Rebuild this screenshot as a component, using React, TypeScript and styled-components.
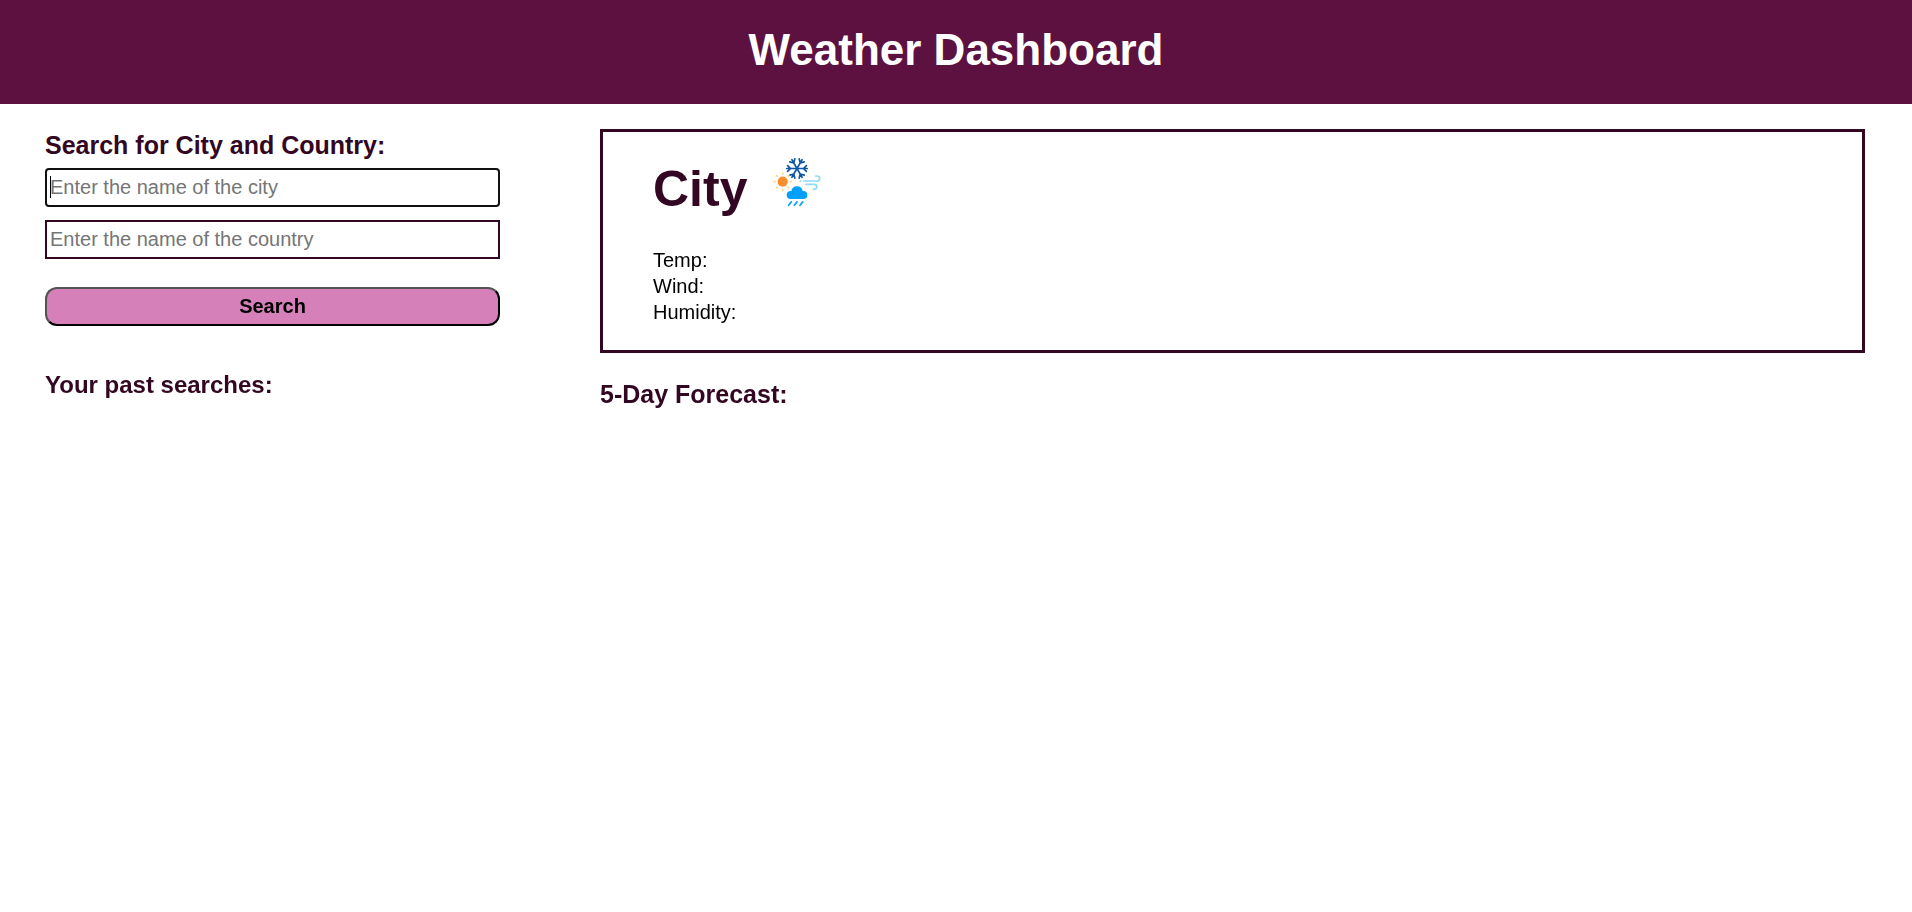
import React from "react";
import styled, { createGlobalStyle } from "styled-components";

const GlobalStyle = createGlobalStyle`
  *, *::before, *::after { box-sizing: border-box; }
  body {
    margin: 0;
    background: #fff;
    color: #000;
    font-family: "Liberation Sans", Arial, Helvetica, sans-serif;
    font-size: 20px;
    line-height: 26px;
  }
  h1, h2, h3, p { margin: 0; }
`;

const Header = styled.header`
  padding: 24px 20px 28px;
  background: #5d1140;
  color: #fff;
  text-align: center;
`;

const PageTitle = styled.h1`
  font-size: 44px;
  line-height: 52px;
`;

const Content = styled.main`
  display: grid;
  grid-template-columns: 25% minmax(0, 1fr);
  column-gap: 100px;
  padding: 25px 47px 40px 45px;
`;

const Sidebar = styled.aside`
  display: flex;
  flex-direction: column;
`;

const SearchForm = styled.form`
  display: flex;
  flex-direction: column;
  padding-bottom: 43px;
`;

const SectionTitle = styled.h2<{ $small?: boolean }>`
  color: #330722;
  font-size: ${({ $small }) => ($small ? 24 : 25)}px;
  line-height: 32px;
`;

const FormTitle = styled.label`
  padding-bottom: 7px;
  color: #330722;
  font-size: 25px;
  font-weight: bold;
  line-height: 32px;
`;

const TextField = styled.input`
  height: 39px;
  margin-bottom: 13px;
  padding: 1px 3px;
  border: 2px solid #330722;
  border-radius: 0;
  background: #fff;
  font: inherit;

  &::placeholder { color: #757575; }

  &:focus {
    border-color: #101010;
    border-radius: 4px;
    outline: none;
  }

  /* steady insertion bar while the field is empty */
  &:focus:placeholder-shown {
    caret-color: transparent;
    background: linear-gradient(#000, #000) 3px 6px / 1px 22px no-repeat #fff;
  }
`;

const SearchButton = styled.button`
  height: 39px;
  margin-top: 15px;
  padding: 0 6px 2px;
  border: 2px outset #000;
  border-radius: 12px;
  background: #d580b8;
  color: #000;
  font: inherit;
  font-weight: bold;
`;

const Weather = styled.section`
  display: flex;
  flex-direction: column;
  gap: 25px;
`;

const CurrentCard = styled.article`
  padding: 23px 50px 25px;
  border: 3px solid #330722;
`;

const CityRow = styled.div`
  display: flex;
  align-items: flex-start;
  gap: 25px;
  padding-bottom: 29px;
`;

const CityName = styled.h2`
  padding-top: 5px;
  color: #330722;
  font-size: 50px;
  line-height: 58px;
`;

const IconArt = styled.svg`
  display: block;
  width: 50px;
  height: 50px;
  margin-top: 2px;
`;

const Reading = styled.p`
  line-height: 26px;
`;

const angles = [0, 60, 120, 180, 240, 300];
const rays = [0, 45, 90, 135, 180, 225, 270, 315];

function WeatherIcon() {
  return (
    <IconArt viewBox="0 0 50 50" role="img" aria-label="Weather conditions">
      <g stroke="#0c56a4" strokeWidth="1.7" strokeLinecap="round" fill="none">
        {angles.map((a) => (
          <path
            key={a}
            transform={`rotate(${a} 25 11.5)`}
            d="M25 11.5H35.2M31.4 11.5L34.4 8.6M31.4 11.5L34.4 14.4"
          />
        ))}
      </g>
      <circle cx="10.7" cy="24.7" r="5.1" fill="#f98f2c" />
      <g stroke="#ffd58a" strokeWidth="1.8" strokeLinecap="round">
        {rays.map((a) => (
          <path key={a} transform={`rotate(${a} 10.7 24.7)`} d="M18.5 24.7H19.3" />
        ))}
      </g>
      <g stroke="#8edcf3" strokeWidth="1.7" strokeLinecap="round" fill="none">
        <path d="M28.2 24H29M31.9 24H45A2.7 2.5 0 0 0 45 19H43.6" />
        <path d="M34 27.3H42.4A2.4 2.4 0 0 1 42.4 32.1H41.2" />
      </g>
      <path
        fill="#00a0fd"
        d="M18.7 42A4 4 0 0 1 18.7 34H19.3A5.8 5.8 0 0 1 30.7 34H31.3A4 4 0 0 1 31.3 42Z"
      />
      <path d="M20 34.5Q20.4 36.8 22 37.8M30 34.5Q29.6 36.8 28 37.8" stroke="#078eea" strokeWidth="1" fill="none" />
      <path
        d="M19.3 44.9L16.6 48.3M25 44.9L22.3 48.3M30.7 44.9L28 48.3"
        stroke="#10a4fa"
        strokeWidth="1.8"
        strokeLinecap="round"
      />
    </IconArt>
  );
}

export default function App() {
  return (
    <>
      <GlobalStyle />
      <Header>
        <PageTitle>Weather Dashboard</PageTitle>
      </Header>
      <Content>
        <Sidebar>
          <SearchForm onSubmit={(event: React.FormEvent) => event.preventDefault()}>
            <FormTitle htmlFor="city">Search for City and Country:</FormTitle>
            <TextField id="city" type="text" placeholder="Enter the name of the city" autoFocus />
            <TextField
              id="country"
              type="text"
              aria-label="Country"
              placeholder="Enter the name of the country"
            />
            <SearchButton type="submit">Search</SearchButton>
          </SearchForm>
          <SectionTitle $small>Your past searches:</SectionTitle>
        </Sidebar>
        <Weather>
          <CurrentCard>
            <CityRow>
              <CityName>City</CityName>
              <WeatherIcon />
            </CityRow>
            <Reading>Temp:</Reading>
            <Reading>Wind:</Reading>
            <Reading>Humidity:</Reading>
          </CurrentCard>
          <SectionTitle>5-Day Forecast:</SectionTitle>
        </Weather>
      </Content>
    </>
  );
}
